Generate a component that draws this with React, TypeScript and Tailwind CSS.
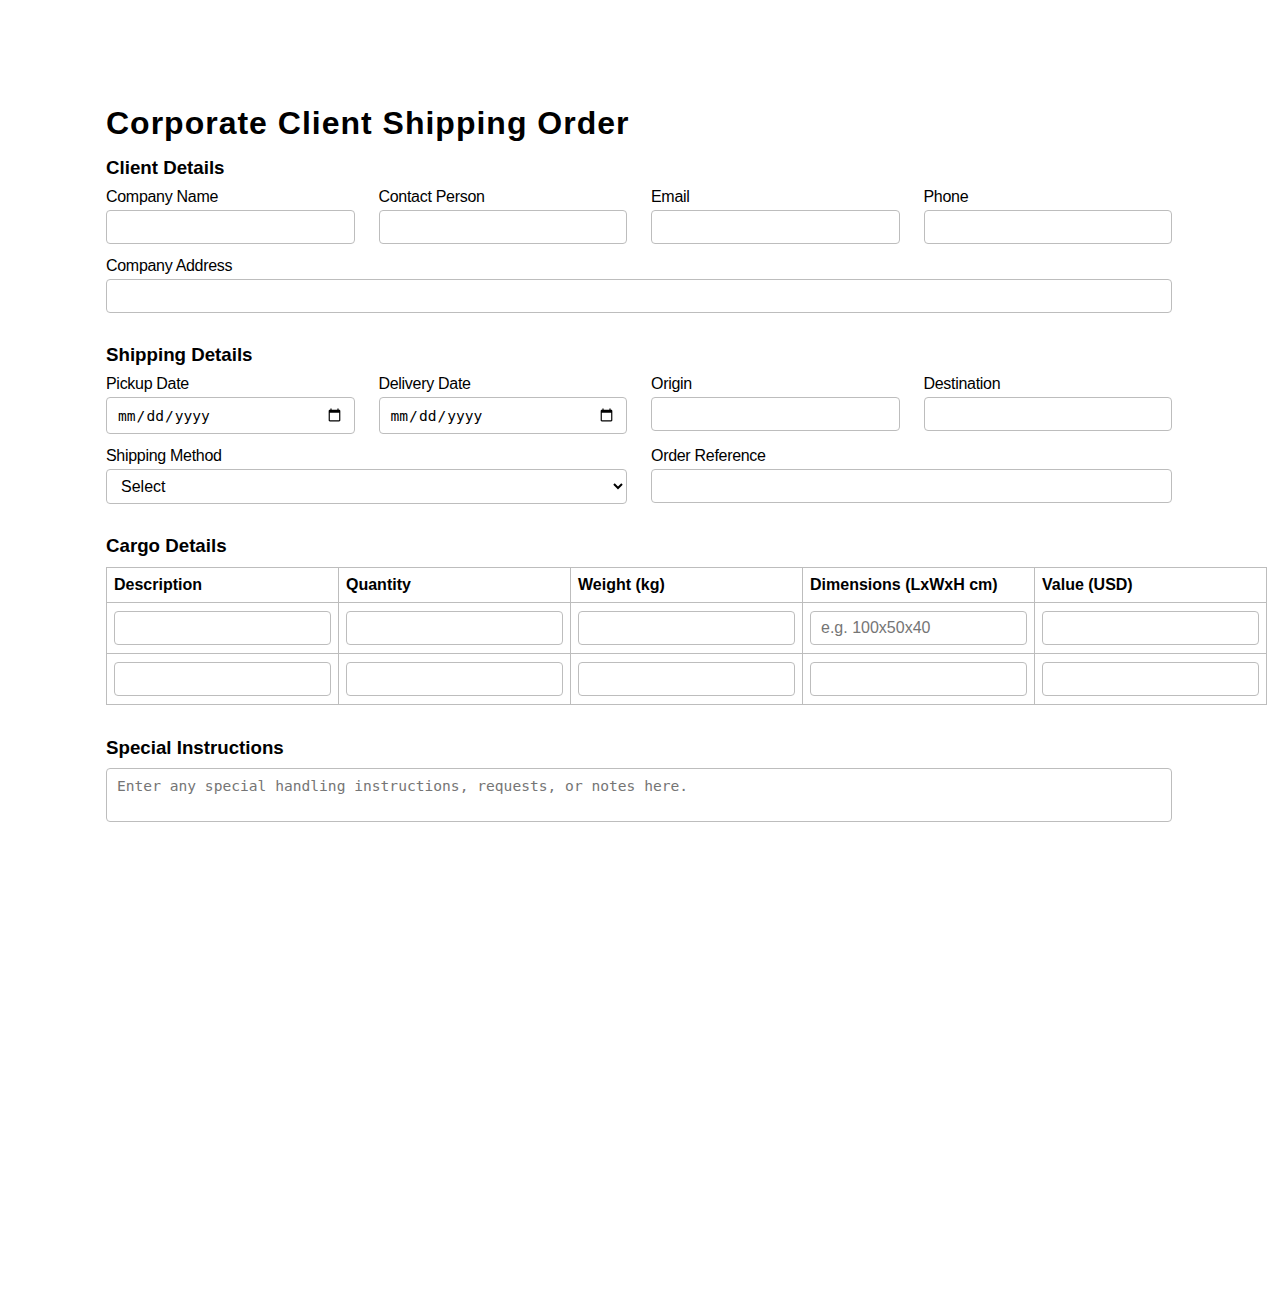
const field =
  "block h-[34px] w-full rounded-[4px] border border-[#bdbdbd] bg-white px-[8px] text-[15.2px] outline-none";
const lbl = "mb-[4px] block text-[16px] leading-[18px] tracking-[-0.3px]";
const h2 = "text-[18.72px] font-bold leading-[21px]";

function Field({ label, type = "text", wide = false }: { label: string; type?: string; wide?: boolean }) {
  return (
    <div className={wide ? "col-span-2" : ""}>
      <label className={lbl}>{label}</label>
      {type === "date" ? (
        <input
          type="date"
          className="block h-[37px] w-full rounded-[4px] border border-[#bdbdbd] bg-white px-[10px] font-['DejaVu_Sans_Mono',monospace] text-[14.6px] outline-none"
        />
      ) : (
        <input type={type} className={field} />
      )}
    </div>
  );
}

const cols = ["Description", "Quantity", "Weight (kg)", "Dimensions (LxWxH cm)", "Value (USD)"];

export default function App() {
  return (
    <div className="min-h-[1300px] bg-white font-['Liberation_Sans',Arial,sans-serif] text-black">
      <div className="mx-auto w-[1066px] pt-[105px]">
        <h1 className="text-[32px] font-bold leading-[37px] tracking-[1px]">
          Corporate Client Shipping Order
        </h1>

        {/* Client */}
        <h2 className={`mt-[15px] mb-[10px] ${h2}`}>Client Details</h2>
        <div className="grid grid-cols-4 gap-x-[24px] gap-y-[13px]">
          <Field label="Company Name" />
          <Field label="Contact Person" />
          <Field label="Email" type="email" />
          <Field label="Phone" type="tel" />
          <div className="col-span-4">
            <label className={lbl}>Company Address</label>
            <input type="text" className={field} />
          </div>
        </div>

        {/* Shipping */}
        <h2 className={`mt-[31px] mb-[10px] ${h2}`}>Shipping Details</h2>
        <div className="grid grid-cols-4 items-start gap-x-[24px] gap-y-[13px]">
          <Field label="Pickup Date" type="date" />
          <Field label="Delivery Date" type="date" />
          <Field label="Origin" />
          <Field label="Destination" />
          <div className="col-span-2">
            <label className={lbl}>Shipping Method</label>
            <select className="block h-[35px] w-full rounded-[4px] border border-[#bdbdbd] bg-white px-[10px] text-[16px] outline-none">
              <option>Select</option>
              <option>Air Freight</option>
              <option>Sea Freight</option>
              <option>Ground</option>
              <option>Express</option>
            </select>
          </div>
          <Field label="Order Reference" wide />
        </div>

        {/* Cargo */}
        <h2 className={`mt-[31px] mb-[11px] ${h2}`}>Cargo Details</h2>
        <table className="w-[1161px] table-fixed border-collapse">
          <thead>
            <tr>
              {cols.map((c) => (
                <th
                  key={c}
                  className="border border-[#bdbdbd] px-[7px] py-[8px] text-left text-[16px] font-bold leading-[18px]"
                >
                  {c}
                </th>
              ))}
            </tr>
          </thead>
          <tbody>
            {[0, 1].map((r) => (
              <tr key={r}>
                {cols.map((c, i) => (
                  <td key={c} className="border border-[#bdbdbd] px-[7px] py-[8px]">
                    <input
                      type="text"
                      placeholder={r === 0 && i === 3 ? "e.g. 100x50x40" : ""}
                      className="block h-[34px] w-full rounded-[4px] border border-[#bdbdbd] bg-white px-[10px] text-[16px] outline-none placeholder:text-[#757575]"
                    />
                  </td>
                ))}
              </tr>
            ))}
          </tbody>
        </table>

        {/* Notes */}
        <h2 className={`mt-[32px] mb-[10px] ${h2}`}>Special Instructions</h2>
        <textarea
          placeholder="Enter any special handling instructions, requests, or notes here."
          className="block h-[54px] w-full resize-none rounded-[4px] border border-[#bdbdbd] bg-white px-[10px] py-[8px] font-['DejaVu_Sans_Mono',monospace] text-[14.6px] leading-[18px] outline-none placeholder:text-[#757575]"
        />
      </div>
    </div>
  );
}
